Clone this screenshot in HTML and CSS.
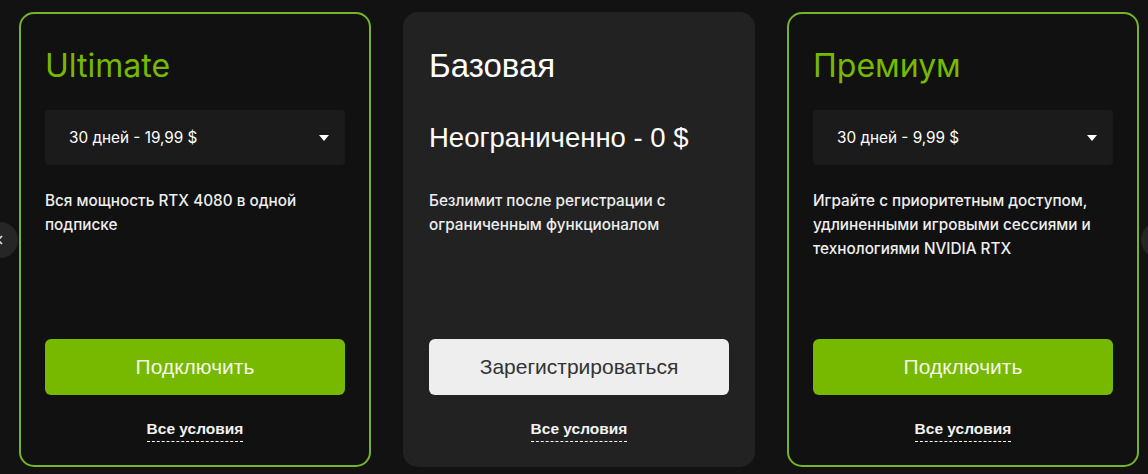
FILE: index.html
```html
<!DOCTYPE html>
<html lang="ru">
<head>
    <meta charset="UTF-8">
    <meta name="viewport" content="width=device-width, initial-scale=1.0">
    <title>Подписки</title>
    <link rel="stylesheet" href="styles.css">
</head>
<body>
    <div class="slider">
        <button class="nav nav-prev" aria-label="Назад">
            <svg width="12" height="12" viewBox="0 0 12 12"><path d="M8 2 L4 6 L8 10" fill="none" stroke="#ddd" stroke-width="1.6"/></svg>
        </button>

        <div class="plans">
            <div class="card card-accent">
                <h2 class="card-title">Ultimate</h2>
                <div class="period">
                    <span>30 дней - 19,99 $</span>
                    <span class="caret"></span>
                </div>
                <p class="card-text">Вся мощность RTX 4080 в одной подписке</p>
                <button class="btn btn-green">Подключить</button>
                <a class="terms" href="#">Все условия</a>
            </div>

            <div class="card card-free">
                <h2 class="card-title">Базовая</h2>
                <div class="price">Неограниченно - 0 $</div>
                <p class="card-text">Безлимит после регистрации с ограниченным функционалом</p>
                <button class="btn btn-light">Зарегистрироваться</button>
                <a class="terms" href="#">Все условия</a>
            </div>

            <div class="card card-accent">
                <h2 class="card-title">Премиум</h2>
                <div class="period">
                    <span>30 дней - 9,99 $</span>
                    <span class="caret"></span>
                </div>
                <p class="card-text">Играйте с приоритетным доступом, удлиненными игровыми сессиями и технологиями NVIDIA RTX</p>
                <button class="btn btn-green">Подключить</button>
                <a class="terms" href="#">Все условия</a>
            </div>
        </div>

        <button class="nav nav-next" aria-label="Вперёд">
            <svg width="12" height="12" viewBox="0 0 12 12"><path d="M4 2 L8 6 L4 10" fill="none" stroke="#ddd" stroke-width="1.6"/></svg>
        </button>
    </div>
</body>
</html>
```

FILE: styles.css
```css
body {
    margin: 0;
    background-color: #121212;
    color: #fff;
    font-family: "Liberation Sans", Arial, sans-serif;
    overflow: hidden;
}
.slider {
    position: relative;
    height: 474px;
}
.plans {
    display: flex;
    gap: 32px;
    padding: 12px 0 0 19px;
}
.card {
    box-sizing: border-box;
    width: 352px;
    height: 455px;
    padding: 34px 24px 23px;
    border: 2px solid transparent;
    border-radius: 15px;
    display: flex;
    flex-direction: column;
}
.card-accent {
    border-color: #74b32a;
    background-color: #111;
    font-family: Inter, "Liberation Sans", sans-serif;
}
.card-free {
    background-color: #222;
}
.card-title {
    margin: 0;
    font-size: 33px;
    line-height: 36px;
    font-weight: 400;
}
.card-accent .card-title {
    font-size: 32px;
    color: #76b900;
}
.period {
    margin-top: 26px;
    height: 55px;
    padding: 0 16px 0 24px;
    background-color: #1b1b1b;
    border-radius: 3px;
    display: flex;
    align-items: center;
    justify-content: space-between;
    font-size: 15.3px;
}
.caret {
    width: 0;
    height: 0;
    border-left: 5px solid transparent;
    border-right: 5px solid transparent;
    border-top: 6px solid #fff;
}
.price {
    margin-top: 26px;
    height: 55px;
    display: flex;
    align-items: center;
    font-size: 27.5px;
}
.card-text {
    margin: 24px 0 0;
    font-family: Inter, "Liberation Sans", sans-serif;
    font-size: 15.3px;
    line-height: 24px;
    font-weight: 500;
    color: #eee;
}
.btn {
    margin-top: auto;
    height: 56px;
    border: none;
    border-radius: 6px;
    font-family: "Liberation Sans", Arial, sans-serif;
    font-size: 21px;
    cursor: pointer;
}
.btn-green {
    background-color: #76b900;
    color: #f4f7e6;
}
.btn-light {
    background-color: #eee;
    color: #333;
}
.terms {
    align-self: center;
    margin-top: 24px;
    padding-bottom: 2px;
    font-family: "Liberation Sans", Arial, sans-serif;
    font-size: 15.5px;
    line-height: 20px;
    font-weight: 700;
    color: #f2f2f2;
    text-decoration: none;
    border-bottom: 1px dashed #fff;
}
.nav {
    position: absolute;
    top: 222px;
    width: 36px;
    height: 36px;
    border: none;
    border-radius: 50%;
    background-color: #262626;
    padding: 0;
    display: flex;
    align-items: center;
}
.nav-prev {
    left: -18px;
    justify-content: flex-end;
    padding-right: 12px;
}
.nav-next {
    left: 1141px;
    justify-content: flex-start;
    padding-left: 12px;
}
```
